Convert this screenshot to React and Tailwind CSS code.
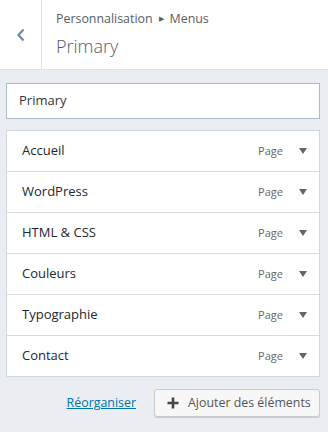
const items = ['Accueil', 'WordPress', 'HTML & CSS', 'Couleurs', 'Typographie', 'Contact'];

const font = { fontFamily: '"Open Sans", "Noto Sans", sans-serif' };

export default function App() {
  return (
    <div className="w-[328px] h-[432px] bg-[#eaeef2] overflow-hidden" style={font}>
      <div className="flex h-[70px] bg-white border-b border-[#dde3e8]">
        <div className="w-[42px] border-r border-[#dde3e8] flex items-center justify-center">
          <svg width="10" height="14" viewBox="0 0 10 14">
            <path d="M7.5 1.5 L2.5 7 L7.5 12.5" fill="none" stroke="#6f8ba4" strokeWidth="2.2" />
          </svg>
        </div>
        <div className="pl-[14px] pt-[10px]">
          <div className="text-[12.4px] text-[#555d66] leading-[18px] flex items-center">
            Personnalisation
            <span className="mx-[6px] text-[7px]">▶</span>
            Menus
          </div>
          <div className="text-[18px] font-light text-[#555d66] leading-[26px] mt-[5px]">Primary</div>
        </div>
      </div>
      <div className="pl-[6px] pr-[8px] pt-[13px]">
        <div className="h-[36px] bg-white border border-[#a9bccc] flex items-center px-[12px] text-[13px] text-[#32373c]">
          Primary
        </div>
        <div className="mt-[11px] bg-white border border-[#cdd8e0] divide-y divide-[#d4dde4]">
          {items.map((it) => (
            <div key={it} className="box-content h-[40px] flex items-center pl-[15px] pr-[12px]">
              <span className="flex-1 text-[13px] text-[#23282d]">{it}</span>
              <span className="text-[11px] text-[#666]">Page</span>
              <svg className="ml-[16px]" width="8" height="6" viewBox="0 0 8 6">
                <path d="M0 0 H8 L4 6 Z" fill="#60666c" />
              </svg>
            </div>
          ))}
        </div>
        <div className="flex items-center justify-end mt-[12px] gap-[18px]">
          <a className="text-[12.4px] text-[#0073aa] underline">Réorganiser</a>
          <button className="h-[28px] w-[166px] pl-[12px] flex items-center gap-[9px] bg-[#f7f7f7] border border-[#cccccc] rounded-[3px] shadow-[0_1px_0_#cccccc] text-[12.4px] text-[#555]">
            <svg width="12" height="12" viewBox="0 0 12 12">
              <path d="M6 0.5 V11.5 M0.5 6 H11.5" stroke="#444" strokeWidth="2.6" />
            </svg>
            Ajouter des éléments
          </button>
        </div>
      </div>
    </div>
  );
}
